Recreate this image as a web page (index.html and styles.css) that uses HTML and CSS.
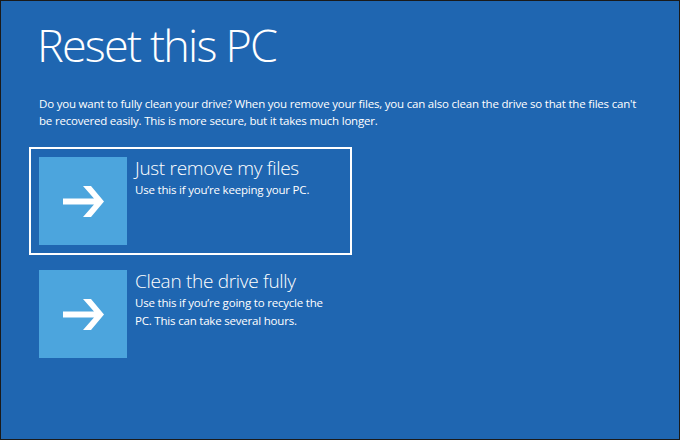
FILE: index.html
```html
<!DOCTYPE html>
<html lang="en">
	<head>
		<meta charset="utf-8">
		<title>Reset this PC</title>
		<link rel="stylesheet" href="styles.css">
	</head>
	<body>
		<div id="screen">
			<h1>Reset this PC</h1>
			<p class="intro">Do you want to fully clean your drive? When you remove your files, you can also clean the drive so that the files can't be recovered easily. This is more secure, but it takes much longer.</p>
			<div class="options">
				<div class="option selected">
					<div class="tile">
						<svg width="41" height="31" viewBox="0 0 41 31"><polygon points="0,12.5 31,12.5 20,0 28,0 41,15.5 28,31 20,31 31,18.5 0,18.5" fill="#fff"/></svg>
					</div>
					<div class="label">
						<h2>Just remove my files</h2>
						<p>Use this if you’re keeping your PC.</p>
					</div>
				</div>
				<div class="option">
					<div class="tile">
						<svg width="41" height="31" viewBox="0 0 41 31"><polygon points="0,12.5 31,12.5 20,0 28,0 41,15.5 28,31 20,31 31,18.5 0,18.5" fill="#fff"/></svg>
					</div>
					<div class="label">
						<h2>Clean the drive fully</h2>
						<p>Use this if you’re going to recycle the PC. This can take several hours.</p>
					</div>
				</div>
			</div>
		</div>
	</body>
</html>
```

FILE: styles.css
```css
* {
	margin: 0px;
	padding: 0px;
	box-sizing: border-box;
}

body {
	background-color: #1a1a1a;
}

#screen {
	width: 680px;
	height: 440px;
	border: 1px solid #1a1a1a;
	background-color: rgb(31, 102, 177);
	color: rgb(255, 255, 255);
	font-family: "Open Sans", "Noto Sans", sans-serif;
	padding: 0 28px;
}

h1 {
	font-size: 45px;
	font-weight: 300;
	line-height: 56px;
	margin-top: 16px;
	margin-left: 8px;
	letter-spacing: -1.8px;
}

.intro {
	font-size: 11.5px;
	letter-spacing: -0.2px;
	line-height: 17px;
	margin-top: 22px;
	margin-left: 10px;
	width: 610px;
}

.options {
	display: flex;
	flex-direction: column;
	gap: 5px;
	margin-top: 18px;
}

.option {
	display: flex;
	gap: 8px;
	width: 323px;
	padding: 8px;
	border: 2px solid transparent;
}

.option.selected {
	border-color: rgb(255, 255, 255);
}

.tile {
	width: 88px;
	height: 88px;
	flex-shrink: 0;
	background-color: rgb(76, 165, 221);
	display: flex;
	align-items: center;
	justify-content: center;
}

.label h2 {
	font-size: 19px;
	font-weight: 300;
	line-height: 22px;
	letter-spacing: -0.3px;
}

.label p {
	font-size: 11.5px;
	letter-spacing: -0.2px;
	line-height: 18px;
	margin-top: 2px;
	width: 200px;
}
```
